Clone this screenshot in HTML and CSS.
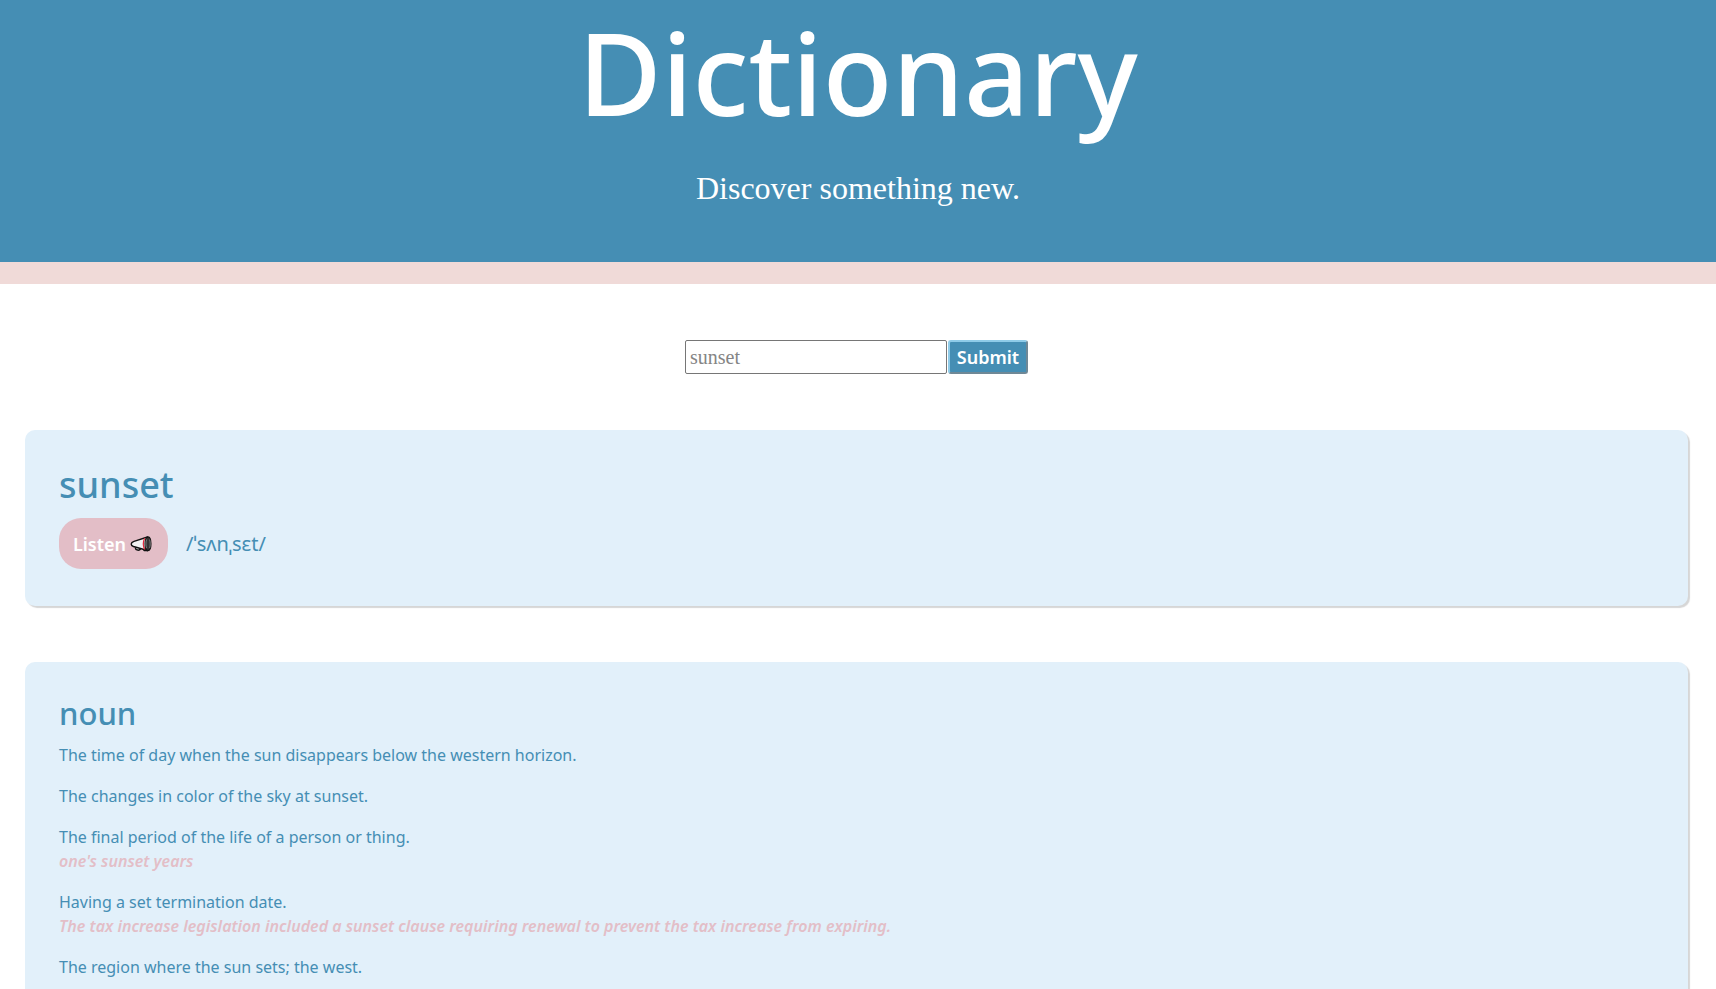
FILE: index.html
```html
<!DOCTYPE html>
<html lang="en">
<head>
<meta charset="utf-8">
<meta name="viewport" content="width=device-width, initial-scale=1">
<title>Dictionary</title>
<link rel="stylesheet" href="styles.css">
</head>
<body>
<header class="header">
  <h1 class="title">Dictionary</h1>
  <p class="tagline">Discover something new.</p>
</header>
<main class="main">
  <form class="search">
    <input class="search-input" type="search" placeholder="sunset" aria-label="Search for a word">
    <button class="search-button" type="submit">Submit</button>
  </form>
  <section class="card">
    <h2 class="word">sunset</h2>
    <div class="phonetic">
      <button class="listen" type="button">Listen
        <svg class="megaphone" viewBox="0 0 22 16" aria-hidden="true">
          <path d="M5.500 11.500v.8c0 2 4 2.600 5 .6" fill="#eee" stroke="#111" stroke-width="1.500"/>
          <path d="M12.500 13.500l1.500 1.800h4l-1-1z" fill="#111"/>
          <path d="M17.500 1L4 5.300C.4 6.500.4 9.500 3.500 10.500L17.500 14.500z" fill="#f2f2f2" stroke="#111" stroke-width="1.400" stroke-linejoin="round"/>
          <path d="M14.600 2.200c-1.400 3-1.400 8 0 11.200" fill="none" stroke="#e0283c" stroke-width="1.200"/>
          <ellipse cx="18" cy="7.800" rx="2.900" ry="6.900" fill="#333" stroke="#111" stroke-width="1.300"/>
          <path d="M16.400 3.500c-.7 3-.7 6 0 8.600M19.700 3.500c.7 3 .7 6 0 8.600" fill="none" stroke="#bbb" stroke-width=".6"/>
        </svg>
      </button>
      <span class="phonetic-text">/ˈsʌnˌsɛt/</span>
    </div>
  </section>
  <section class="card">
    <h3 class="part">noun</h3>
    <div class="definitions">
      <div class="definition"><p>The time of day when the sun disappears below the western horizon.</p></div>
      <div class="definition"><p>The changes in color of the sky at sunset.</p></div>
      <div class="definition"><p>The final period of the life of a person or thing.</p><p class="example">one's sunset years</p></div>
      <div class="definition"><p>Having a set termination date.</p><p class="example">The tax increase legislation included a sunset clause requiring renewal to prevent the tax increase from expiring.</p></div>
      <div class="definition"><p>The region where the sun sets; the west.</p></div>
    </div>
  </section>
</main>
</body>
</html>
```
FILE: styles.css
```css
* { box-sizing: border-box; }
body {
  margin: 0;
  background: #fff;
  color: #458eb4;
  font: 16px/24px "Noto Sans", sans-serif;
}
h1, h2, h3, p { margin: 0; }
.header {
  padding: 0 0 46px;
  border-bottom: 22px solid #f0dad8;
  background: #458eb4;
  color: #fff;
  text-align: center;
}
.title {
  font-size: 114px;
  font-weight: 500;
  line-height: 144px;
}
.tagline {
  padding-top: 16px;
  font: 32px/56px "Liberation Serif", serif;
}
.main { padding: 56px 28px 0 25px; }
.search {
  display: flex;
  justify-content: center;
  gap: 1px;
  margin-bottom: 56px;
}
.search-input {
  width: 262px;
  height: 34px;
  padding: 1px 4px;
  border: 1px solid #767676;
  border-radius: 2px;
  background: #fff;
  font: 20px "Liberation Serif", serif;
}
.search-input::placeholder { color: #858585; }
.search-button {
  width: 80px;
  height: 34px;
  padding: 0;
  border: 2px solid;
  border-color: #8fcbe8 #6f8896 #6f8896 #8fcbe8;
  border-radius: 3px;
  background: #458eb4;
  color: #fff;
  font: 600 18px "Noto Sans", sans-serif;
}
.card {
  margin-bottom: 56px;
  padding: 34px;
  border-radius: 10px;
  background: #e2f0fa;
  box-shadow: 2px 2px 1px #d6d6d6;
}
.word {
  font-size: 36px;
  font-weight: 500;
  line-height: 42px;
}
.phonetic {
  display: flex;
  align-items: center;
  gap: 18px;
  margin: 12px 0 3px;
}
.listen {
  display: flex;
  align-items: center;
  justify-content: center;
  gap: 4px;
  width: 109px;
  height: 51px;
  padding: 0 2px 0 0;
  border: 0;
  border-radius: 22px;
  background: #e3bec7;
  color: #fff;
  font: 600 18px "Noto Sans", sans-serif;
}
.megaphone { width: 22px; height: 16px; }
.phonetic-text { font-size: 20px; }
.part {
  font-size: 31px;
  font-weight: 500;
  line-height: 34px;
}
.definitions {
  display: flex;
  flex-direction: column;
  gap: 17px;
  margin-top: 13px;
}
.example {
  color: #e3bec7;
  font-style: italic;
  font-weight: 600;
}
```
